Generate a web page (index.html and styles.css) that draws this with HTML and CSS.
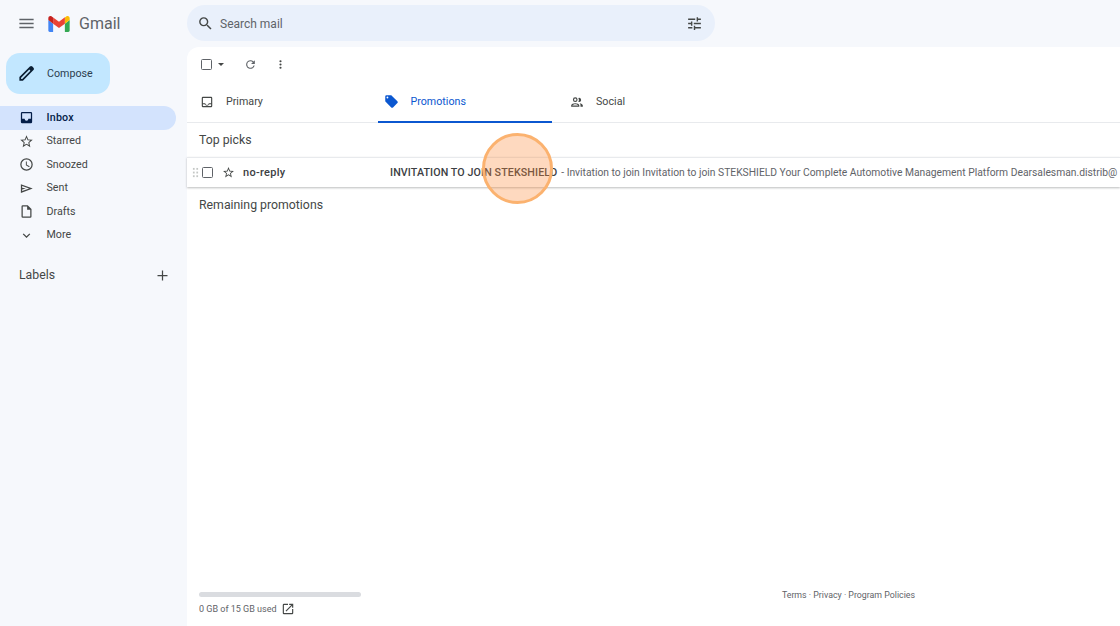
FILE: index.html
```html
<!DOCTYPE html>
<html lang="en">
<head>
<meta charset="utf-8">
<title>Gmail</title>
<link rel="stylesheet" href="styles.css">
</head>
<body>
<div class="app">
  <aside class="sidebar">
    <div class="brand">
      <svg class="menu-icon" viewBox="0 0 24 24"><path d="M3 18h18v-2H3v2zm0-5h18v-2H3v2zm0-7v2h18V6H3z"/></svg>
      <svg class="logo" viewBox="0 0 24 18">
        <path fill="#4285f4" d="M1.600 18H5.400V8.700L0 4.600V16.400C0 17.300.7 18 1.600 18z"/>
        <path fill="#34a853" d="M18.600 18h3.800c.9 0 1.600-.7 1.600-1.600V4.600l-5.400 4.100z"/>
        <path fill="#fbbc04" d="M18.600 1.600v7.100L24 4.600V2.400C24 .4 21.700-.7 20.200.5z"/>
        <path fill="#ea4335" d="M5.400 8.700V1.600L12 6.500l6.600-5v7.200L12 13.600z"/>
        <path fill="#c5221f" d="M0 2.400v2.200l5.400 4.100V1.600L3.800.5C2.300-.7 0 .4 0 2.400z"/>
      </svg>
      <span class="wordmark">Gmail</span>
    </div>
    <button class="compose">
      <svg class="compose-icon" viewBox="0 0 24 24"><path fill-rule="evenodd" d="M3 21v-4.500L16.300 3.200a2.200 2.200 0 0 1 3.100 0l1.400 1.400a2.200 2.200 0 0 1 0 3.100L7.500 21H3zm2.200-2.200h1.400L16.900 8.500l-1.400-1.400L5.200 17.400v1.400z"/></svg>
      <span>Compose</span>
    </button>
    <nav class="nav">
      <a class="nav-item active">
        <svg viewBox="0 0 24 24"><path fill-rule="evenodd" d="M5 3h14a2 2 0 0 1 2 2v14a2 2 0 0 1-2 2H5a2 2 0 0 1-2-2V5a2 2 0 0 1 2-2zm0 2v9h4a3 3 0 0 0 6 0h4V5H5z"/></svg>
        <span>Inbox</span>
      </a>
      <a class="nav-item">
        <svg viewBox="0 0 24 24"><path fill-rule="evenodd" d="M22 9.200l-7.200-.6L12 2 9.200 8.600 2 9.200l5.500 4.700L5.800 21l6.200-3.700 6.200 3.700-1.700-7.100L22 9.200zM12 15.400l-3.800 2.300 1-4.300-3.300-2.900 4.400-.4L12 6.100l1.700 4 4.400.4-3.300 2.900 1 4.300-3.800-2.300z"/></svg>
        <span>Starred</span>
      </a>
      <a class="nav-item">
        <svg viewBox="0 0 24 24"><path fill-rule="evenodd" d="M12 2a10 10 0 1 0 0 20 10 10 0 0 0 0-20zm0 18a8 8 0 1 1 0-16 8 8 0 0 1 0 16zm.5-13H11v6l5.200 3.200.8-1.300-4.500-2.700V7z"/></svg>
        <span>Snoozed</span>
      </a>
      <a class="nav-item">
        <svg viewBox="0 0 24 24"><path fill-rule="evenodd" d="M3 5l19 7-19 7V5zm2 2.900v2.700l6 1.400-6 1.400v2.700L16.200 12 5 7.900z"/></svg>
        <span>Sent</span>
      </a>
      <a class="nav-item">
        <svg viewBox="0 0 24 24"><path fill-rule="evenodd" d="M14 2H6a2 2 0 0 0-2 2v16a2 2 0 0 0 2 2h12a2 2 0 0 0 2-2V8l-6-6zm4 18H6V4h7v5h5v11z"/></svg>
        <span>Drafts</span>
      </a>
      <a class="nav-item">
        <svg viewBox="0 0 24 24"><path d="M7.400 8.600L12 13.200l4.600-4.600L18 10l-6 6-6-6z"/></svg>
        <span>More</span>
      </a>
    </nav>
    <div class="labels">
      <span>Labels</span>
      <svg viewBox="0 0 24 24"><path d="M20 13h-7v7h-2v-7H4v-2h7V4h2v7h7v2z"/></svg>
    </div>
  </aside>

  <div class="content">
    <header class="searchbar">
      <div class="search">
        <svg class="search-icon" viewBox="0 0 24 24"><path d="M15.500 14h-.79l-.28-.27A6.471 6.471 0 0 0 16 9.500 6.500 6.500 0 1 0 9.500 16c1.610 0 3.090-.59 4.230-1.570l.27.28v.79l5 4.990L20.490 19l-4.990-5zm-6 0C7.010 14 5 11.990 5 9.500S7.010 5 9.500 5 14 7.010 14 9.500 11.990 14 9.500 14z"/></svg>
        <span class="search-text">Search mail</span>
        <svg class="tune-icon" viewBox="0 0 24 24"><path d="M3 17v2h6v-2H3zM3 5v2h10V5H3zm10 16v-2h8v-2h-8v-2h-2v6h2zM7 9v2H3v2h4v2h2V9H7zm14 4v-2H11v2h10zm-6-4h2V7h4V5h-4V3h-2v6z"/></svg>
      </div>
    </header>
    <main class="panel">
      <div class="toolbar">
        <span class="checkbox"></span>
        <span class="caret"></span>
        <svg class="refresh" viewBox="0 0 24 24"><path d="M17.650 6.350A8 8 0 1 0 19.730 14h-2.080A6 6 0 1 1 12 6c1.660 0 3.140.69 4.220 1.780L13 11h7V4l-2.350 2.350z"/></svg>
        <svg class="dots" viewBox="0 0 24 24"><path d="M12 8a2 2 0 1 0 0-4 2 2 0 0 0 0 4zm0 2a2 2 0 1 0 0 4 2 2 0 0 0 0-4zm0 6a2 2 0 1 0 0 4 2 2 0 0 0 0-4z"/></svg>
      </div>
      <div class="tabs">
        <div class="tab primary">
          <svg viewBox="0 0 24 24"><path fill-rule="evenodd" d="M5 3h14a2 2 0 0 1 2 2v14a2 2 0 0 1-2 2H5a2 2 0 0 1-2-2V5a2 2 0 0 1 2-2zm0 2v9h4a3 3 0 0 0 6 0h4V5H5zm0 11v3h14v-3h-2.800a5 5 0 0 1-8.400 0H5z"/></svg>
          <span>Primary</span>
        </div>
        <div class="tab promotions">
          <svg viewBox="0 0 24 24"><path d="M21.400 11.600l-9-9C12 2.200 11.500 2 11 2H4a2 2 0 0 0-2 2v7c0 .6.2 1.100.6 1.400l9 9c.4.4.9.6 1.400.6s1.100-.2 1.400-.6l7-7c.4-.4.6-.9.6-1.400s-.2-1.100-.6-1.400zM5.500 7A1.500 1.500 0 1 1 5.500 4a1.500 1.500 0 0 1 0 3z"/></svg>
          <span>Promotions</span>
        </div>
        <div class="tab social">
          <svg viewBox="0 0 24 24"><path fill-rule="evenodd" d="M9 12a4 4 0 1 0 0-8 4 4 0 0 0 0 8zm0-6a2 2 0 1 1 0 4 2 2 0 0 1 0-4zm6.500 6a3.500 3.500 0 1 0-1.200-6.800 6 6 0 0 1 0 6.600c.4.1.8.2 1.200.2zM9 14c-3 0-7 1.500-7 4v2h14v-2c0-2.500-4-4-7-4zm-5 4c.2-.7 2.800-2 5-2s4.800 1.300 5 2H4zm12.500-3.800c1.200.9 1.500 2.300 1.500 3.800v2h4v-2c0-2-3-3.400-5.500-3.800z"/></svg>
          <span>Social</span>
        </div>
      </div>
      <h2 class="section-title top">Top picks</h2>
      <div class="mail-row">
        <span class="grip"></span>
        <span class="checkbox"></span>
        <svg class="row-star" viewBox="0 0 24 24"><path fill-rule="evenodd" d="M22 9.200l-7.200-.6L12 2 9.200 8.600 2 9.200l5.500 4.700L5.800 21l6.200-3.700 6.200 3.700-1.700-7.100L22 9.200zM12 15.400l-3.800 2.300 1-4.300-3.300-2.900 4.400-.4L12 6.100l1.700 4 4.400.4-3.300 2.900 1 4.300-3.800-2.300z"/></svg>
        <span class="sender">no-reply</span>
        <span class="subject">INVITATION TO JOIN STEKSHIELD</span>
        <span class="snippet">- Invitation to join Invitation to join STEKSHIELD Your Complete Automotive Management Platform Dearsalesman.distrib@</span>
      </div>
      <h2 class="section-title remaining">Remaining promotions</h2>
      <footer class="footer">
        <div class="storage">
          <div class="meter"></div>
          <div class="usage">
            <span>0 GB of 15 GB used</span>
            <svg viewBox="0 0 24 24"><path d="M19 19H5V5h7V3H5a2 2 0 0 0-2 2v14a2 2 0 0 0 2 2h14a2 2 0 0 0 2-2v-7h-2v7zM14 3v2h3.600l-9.800 9.800 1.400 1.400L19 6.400V10h2V3h-7z"/></svg>
          </div>
        </div>
        <div class="legal">Terms · Privacy · Program Policies</div>
      </footer>
    </main>
  </div>
</div>
<div class="spotlight"></div>
</body>
</html>
```
FILE: styles.css
```css
* { box-sizing: border-box; }
html, body { margin: 0; height: 100%; overflow: hidden; }
body { background: #f6f8fc; color: #444746; font-family: Roboto, "Liberation Sans", sans-serif; font-size: 10.7px; }
svg { fill: currentColor; display: block; flex: none; }
.app { display: flex; width: 1120px; height: 626px; }

.sidebar { width: 187px; flex: none; display: flex; flex-direction: column; }
.brand { display: flex; align-items: center; height: 47px; padding-left: 17px; }
.menu-icon { width: 19px; height: 19px; color: #5f6368; }
.logo { width: 22px; height: 16px; margin-left: 12px; }
.wordmark { margin: -1px 0 0 9px; font-size: 16px; color: #5f6368; }
.compose { display: flex; align-items: center; width: 104px; height: 41px; margin: 6px 0 0 6px; padding: 0 0 0 11px; border: 0; border-radius: 14px; background: #c2e7ff; color: #2c3e50; font: 400 10.7px Roboto, "Liberation Sans", sans-serif; }
.compose-icon { width: 19px; height: 19px; color: #0b1f33; margin-right: 11px; }
.nav { margin-top: 12px; }
.nav-item { display: flex; align-items: center; width: 176px; height: 23.500px; padding-left: 19px; border-radius: 0 12px 12px 0; color: #444746; }
.nav-item span { margin-top: -1px; }
.nav-item svg { width: 15px; height: 15px; margin-right: 12.500px; }
.nav-item.active { background: #d3e3fd; color: #041e49; font-weight: 500; letter-spacing: .2px; }
.labels { display: flex; align-items: center; justify-content: space-between; margin-top: 20.500px; padding: 0 17px 0 19px; font-size: 12.300px; color: #444746; }
.labels svg { width: 15px; height: 15px; }

.content { flex: 1; min-width: 0; display: flex; flex-direction: column; }
.searchbar { height: 47px; flex: none; padding-top: 5px; }
.search { display: flex; align-items: center; width: 528px; height: 36px; padding: 0 12px 0 10px; border-radius: 18px; background: #e9f0fb; }
.search-icon { width: 17px; height: 17px; color: #444746; }
.search-text { margin: 1px 0 0 6px; font-size: 12px; color: #5f6368; }
.tune-icon { width: 17px; height: 17px; margin-left: auto; color: #444746; }

.panel { flex: 1; display: flex; flex-direction: column; background: #fff; border-radius: 12px 0 0 0; min-height: 0; }
.toolbar { display: flex; align-items: center; height: 35px; padding-left: 14px; flex: none; }
.checkbox { width: 11px; height: 11px; border: 1.500px solid #5f6368; border-radius: 1.500px; flex: none; }
.caret { width: 0; height: 0; margin-left: 5.500px; border: 3px solid transparent; border-top: 3.500px solid #444746; border-bottom: 0; }
.refresh { width: 13px; height: 13px; margin-left: 20.500px; color: #5f6368; }
.dots { width: 13px; height: 13px; margin-left: 16.500px; color: #444746; }

.tabs { display: flex; height: 41px; border-bottom: 1px solid #e8eaed; flex: none; }
.tab { display: flex; align-items: center; height: 41px; padding-bottom: 2px; }
.tab svg { width: 14px; height: 14px; }
.primary { width: 191px; padding-left: 13px; }
.primary span { margin-left: 12px; }
.promotions { width: 174px; padding: 0 0 0 6px; color: #0b57d0; border-bottom: 2px solid #0b57d0; }
.promotions svg { width: 15px; height: 15px; color: #0b57d0; }
.promotions span { margin-left: 11.500px; }
.social { padding-left: 18px; }
.social span { margin-left: 12px; }

.section-title { margin: 0; padding-left: 12px; font-size: 12.300px; font-weight: 400; color: #444746; line-height: 16px; }
.top { margin-top: 9px; }
.remaining { margin-top: 10px; }
.mail-row { display: flex; align-items: center; height: 30px; margin-top: 9px; padding-left: 5px; border-top: 1px solid #e8eaed; box-shadow: 0 1px 2px rgba(60, 64, 67, .35); white-space: nowrap; overflow: hidden; color: #5f6368; }
.grip { width: 7px; height: 11px; flex: none; background-image: radial-gradient(circle, #c4c7c5 1px, transparent 1.200px); background-size: 3.500px 3.700px; }
.mail-row .checkbox { margin-left: 3px; }
.row-star { width: 13px; height: 13px; margin-left: 9px; color: #444746; }
.sender { width: 147px; margin-left: 8px; font-size: 11px; font-weight: 500; letter-spacing: .3px; color: #3c4043; flex: none; }
.subject { font-size: 10.700px; font-weight: 500; letter-spacing: .1px; color: #3c4043; flex: none; }
.snippet { margin-left: 4px; font-size: 10.300px; color: #5f6368; }

.footer { margin-top: auto; display: flex; justify-content: space-between; padding: 0 205px 10px 12px; color: #5f6368; }
.storage { width: 162px; }
.meter { height: 5px; border-radius: 3px; background: #dadce0; }
.usage { display: flex; align-items: center; margin-top: 5px; font-size: 9px; }
.usage svg { width: 14px; height: 14px; margin-left: 4px; color: #444746; }
.legal { font-size: 8.800px; margin-top: -2px; }

.spotlight { position: absolute; left: 482px; top: 133px; width: 71px; height: 71px; border-radius: 50%; border: 3px solid #fbb26f; background: rgba(251, 140, 60, .33); }
```
